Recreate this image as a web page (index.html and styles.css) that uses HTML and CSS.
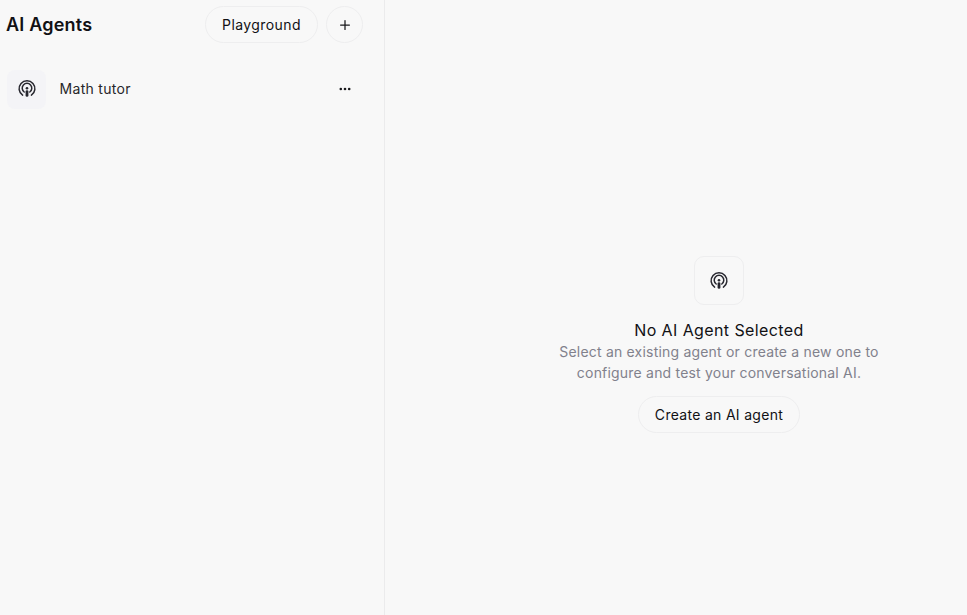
FILE: index.html
```html
<!DOCTYPE html>
<html lang="en">
<head>
  <meta charset="UTF-8">
  <title>AI Agents</title>
  <link rel="stylesheet" href="styles.css">
</head>
<body>
  <div class="layout">
    <aside class="sidebar">
      <div class="sidebar-header">
        <h1 class="sidebar-title">AI Agents</h1>
        <div class="sidebar-actions">
          <button class="pill-button playground-button">Playground</button>
          <button class="round-button" aria-label="New agent">
            <svg width="16" height="16" viewBox="0 0 16 16" fill="none" stroke="#18181b" stroke-width="1.25" stroke-linecap="round"><path d="M8 3.6v8.8M3.6 8h8.8"/></svg>
          </button>
        </div>
      </div>
      <div class="agent-row">
        <div class="agent-icon">
          <svg width="20" height="20" viewBox="0 0 20 20" fill="none" stroke="#27272f" stroke-width="1.5" stroke-linecap="round"><path d="M5.6 16.2a7.9 7.9 0 1 1 8.8 0"/><path d="M7.2 13a4.8 4.8 0 1 1 5.6 0"/><circle cx="10" cy="9.2" r="1.3" fill="#27272f" stroke="none"/><path d="M10 12.6v3.8" stroke-width="2.8"/></svg>
        </div>
        <span class="agent-name">Math tutor</span>
        <svg class="agent-menu" width="16" height="16" viewBox="0 0 16 16" fill="#18181b"><circle cx="3.8" cy="8" r="1.3"/><circle cx="8" cy="8" r="1.3"/><circle cx="12.2" cy="8" r="1.3"/></svg>
      </div>
    </aside>
    <main class="main">
      <div class="empty">
        <div class="empty-icon">
          <svg width="20" height="20" viewBox="0 0 20 20" fill="none" stroke="#27272f" stroke-width="1.5" stroke-linecap="round"><path d="M5.6 16.2a7.9 7.9 0 1 1 8.8 0"/><path d="M7.2 13a4.8 4.8 0 1 1 5.6 0"/><circle cx="10" cy="9.2" r="1.3" fill="#27272f" stroke="none"/><path d="M10 12.6v3.8" stroke-width="2.8"/></svg>
        </div>
        <h2 class="empty-title">No AI Agent Selected</h2>
        <p class="empty-text">Select an existing agent or create a new one to configure and test your conversational AI.</p>
        <button class="pill-button">Create an AI agent</button>
      </div>
    </main>
  </div>
</body>
</html>
```

FILE: styles.css
```css
* {
  margin: 0;
  padding: 0;
  box-sizing: border-box;
}

body {
  font-family: Inter, "Liberation Sans", sans-serif;
  background: #f8f8f8;
  color: #111114;
  height: 100vh;
  overflow: hidden;
}

.layout {
  display: flex;
  height: 100%;
}

.sidebar {
  width: 385px;
  flex-shrink: 0;
  border-right: 1px solid #ebebec;
  padding: 6px 21px 0 6px;
}

.sidebar-header {
  display: flex;
  align-items: center;
  justify-content: space-between;
  height: 37px;
}

.sidebar-title {
  font-size: 18px;
  font-weight: 600;
  line-height: 28px;
  letter-spacing: 0.2px;
}

.sidebar-actions {
  display: flex;
  gap: 8px;
}

.pill-button {
  font-family: inherit;
  font-size: 14px;
  font-weight: 400;
  letter-spacing: 0.3px;
  color: #111114;
  background: #f8f8f8;
  border: 1px solid #eeeeef;
  border-radius: 999px;
  height: 37px;
  padding: 0 16px;
}

.playground-button {
  letter-spacing: 0.42px;
}

.round-button {
  width: 37px;
  height: 37px;
  display: flex;
  align-items: center;
  justify-content: center;
  background: #f8f8f8;
  border: 1px solid #eeeeef;
  border-radius: 50%;
}

.agent-row {
  display: flex;
  align-items: center;
  margin-top: 26px;
  height: 40px;
}

.agent-icon {
  width: 39px;
  height: 39px;
  display: flex;
  align-items: center;
  justify-content: center;
  background: #f4f4f7;
  border-radius: 8px;
  margin: 0 13.5px 0 1px;
}

.agent-name {
  font-size: 14px;
  letter-spacing: 0.31px;
  line-height: 20px;
  margin-top: -1px;
  color: #27272a;
  flex: 1;
}

.agent-menu {
  margin-right: 10px;
}

.main {
  flex: 1;
  display: flex;
  align-items: center;
  justify-content: center;
  padding: 52px 0 0 86px;
}

.empty {
  width: 340px;
  display: flex;
  flex-direction: column;
  align-items: center;
  text-align: center;
  margin-top: 22px;
}

.empty-icon {
  width: 50px;
  height: 49px;
  display: flex;
  align-items: center;
  justify-content: center;
  border: 1px solid #eeeeef;
  border-radius: 10px;
  margin-bottom: 14px;
}

.empty-title {
  font-size: 16px;
  font-weight: 400;
  line-height: 22px;
  letter-spacing: 0.4px;
}

.empty-text {
  font-size: 14px;
  line-height: 21px;
  letter-spacing: 0.2px;
  color: #81818c;
  margin-bottom: 13px;
}
```
